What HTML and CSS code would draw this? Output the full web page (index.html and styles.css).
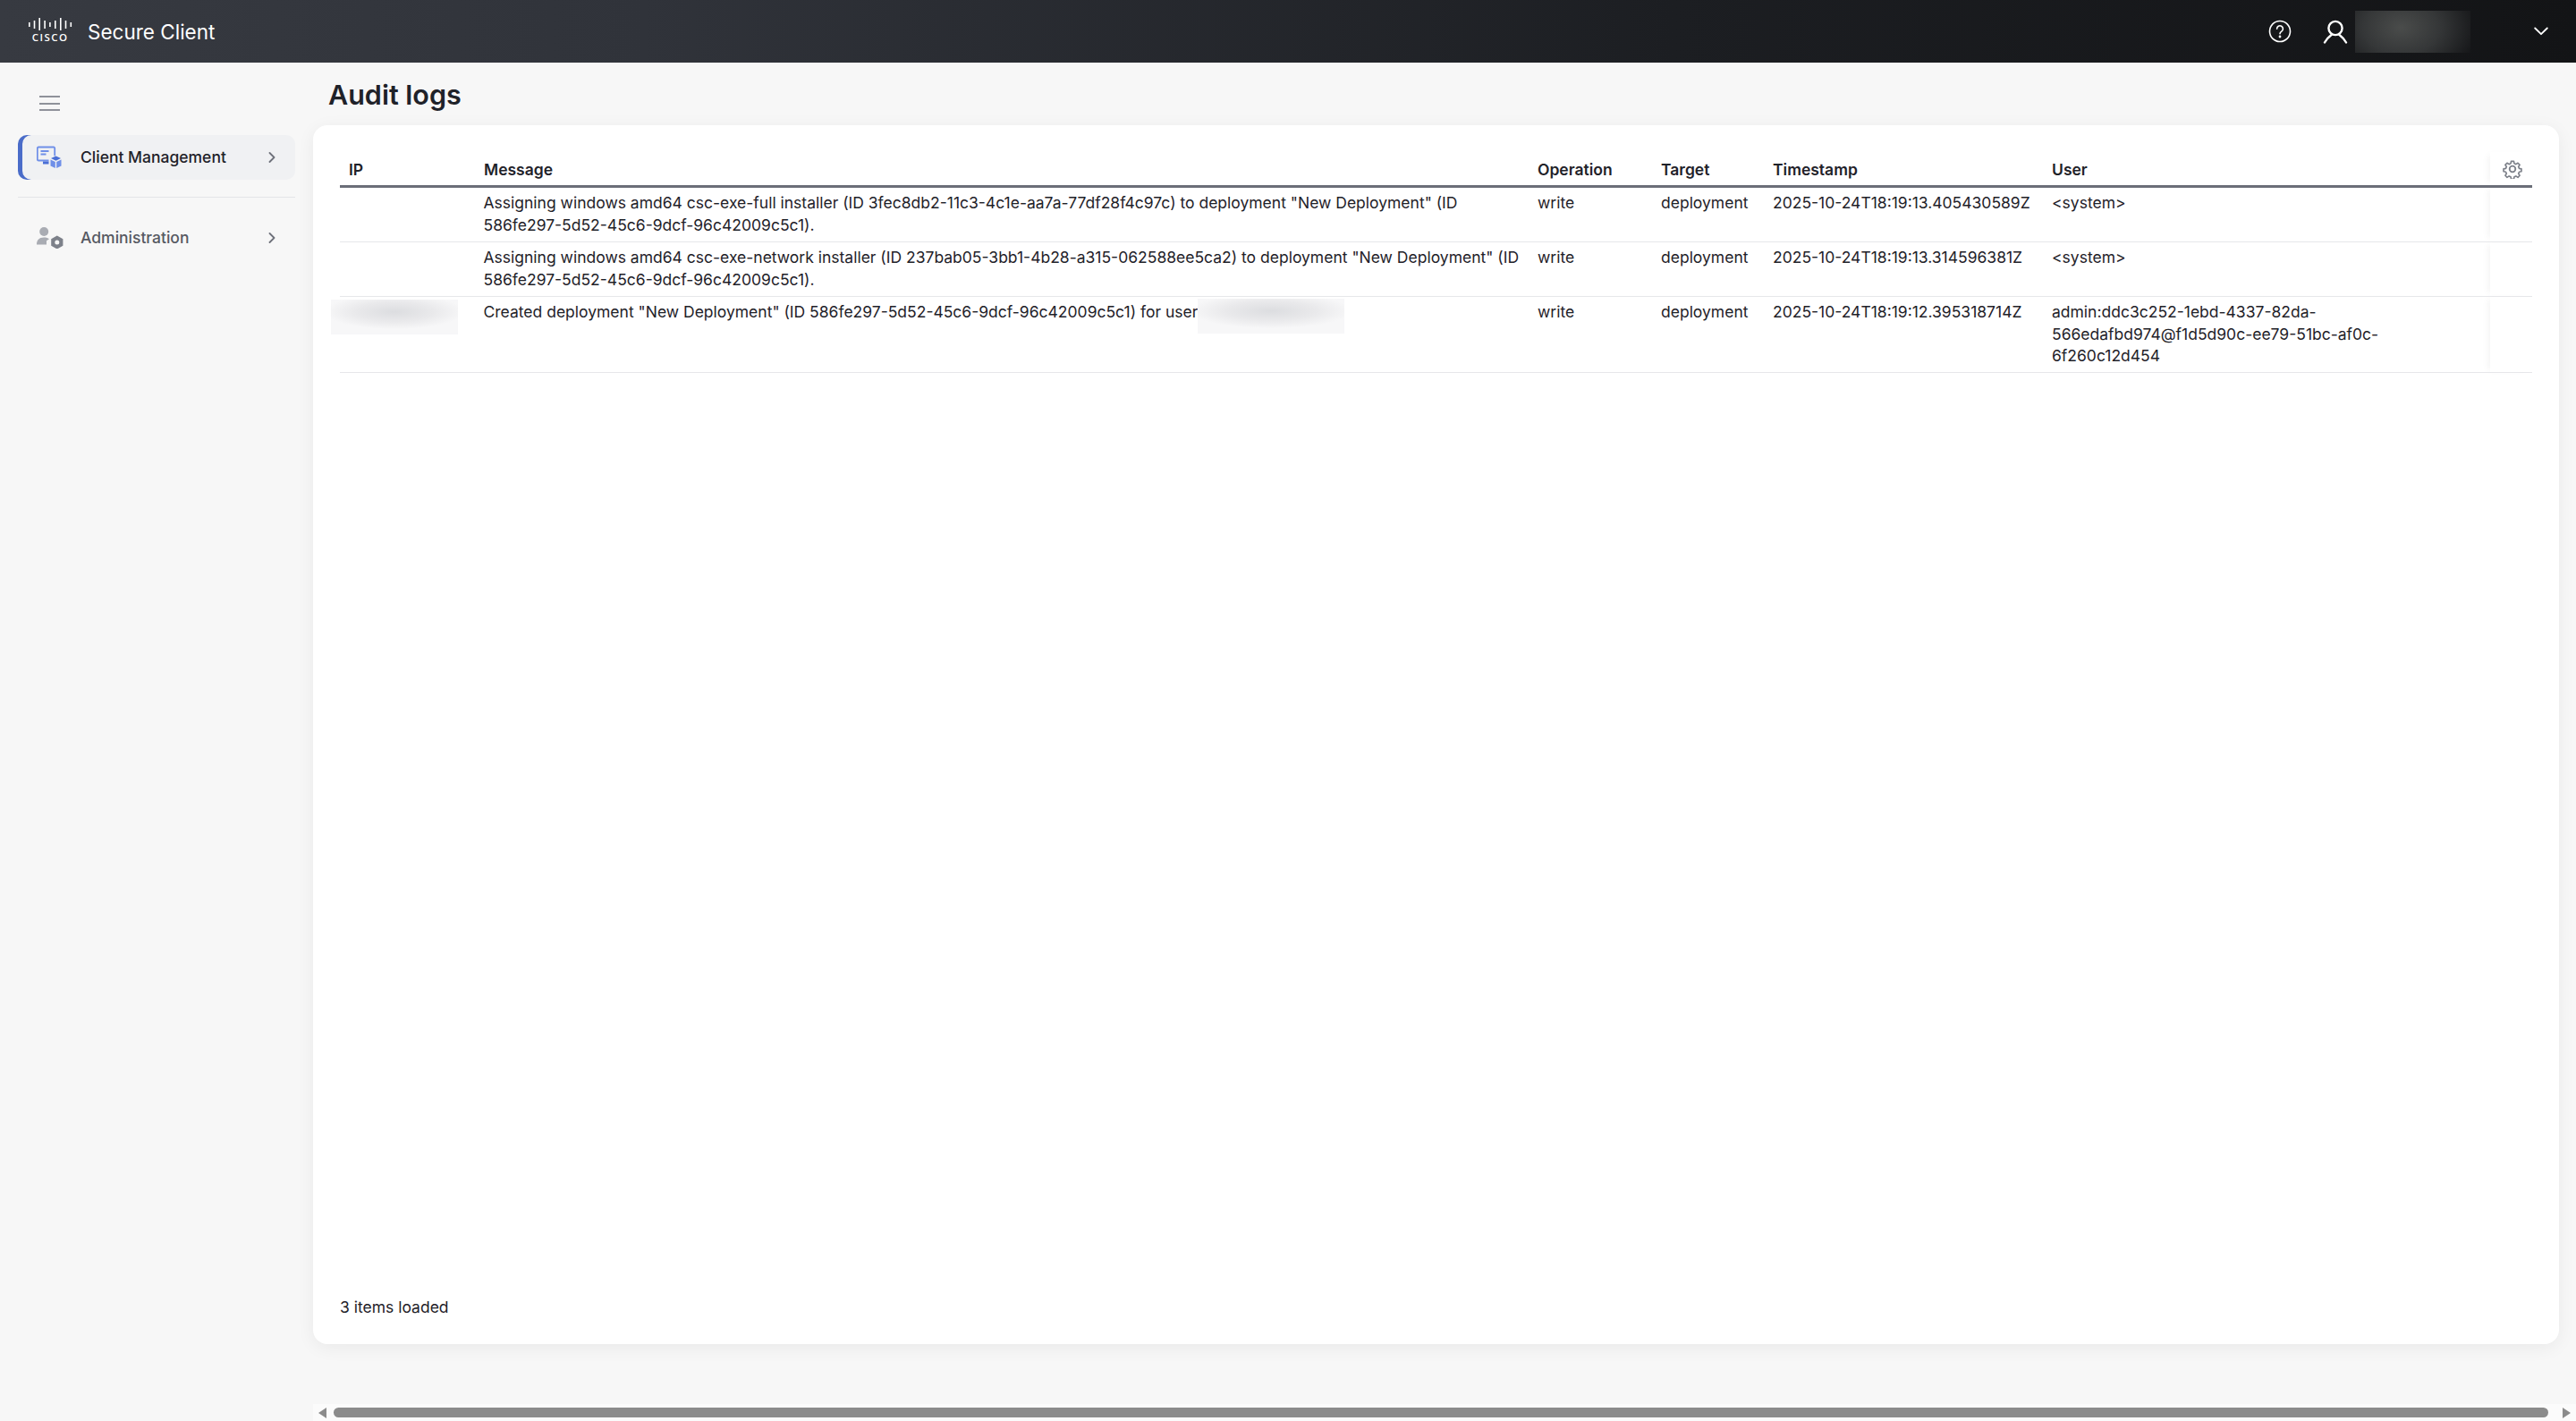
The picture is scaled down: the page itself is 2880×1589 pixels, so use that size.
FILE: index.html
```html
<!DOCTYPE html>
<html lang="en">
<head>
<meta charset="utf-8">
<title>Audit logs - Secure Client</title>
<link rel="stylesheet" href="styles.css">
</head>
<body>
<header class="topbar">
  <div class="brand">
    <svg class="logo" width="50" height="30" viewBox="0 0 50 30" aria-label="Cisco">
      <g fill="#fff">
        <rect x="0" y="5" width="1.6" height="5"/>
        <rect x="5.7" y="3" width="1.6" height="9"/>
        <rect x="11.4" y="0" width="1.6" height="14"/>
        <rect x="17.3" y="3" width="1.6" height="9"/>
        <rect x="23.1" y="5" width="1.6" height="5"/>
        <rect x="29" y="3" width="1.6" height="9"/>
        <rect x="35" y="0" width="1.6" height="14"/>
        <rect x="40.7" y="3" width="1.6" height="9"/>
        <rect x="46.5" y="5" width="1.6" height="5"/>
        <text class="logo-word" x="24.2" y="26" text-anchor="middle">CISCO</text>
      </g>
    </svg>
    <span class="product">Secure Client</span>
  </div>
  <div class="top-actions">
    <svg class="help" width="26" height="26" viewBox="0 0 26 26" fill="none" stroke="#fff" stroke-width="1.6" stroke-linecap="round">
      <circle cx="13" cy="13" r="11.5"/>
      <path d="M9.6 10.2a3.4 3.4 0 1 1 5.2 2.9c-1.1.7-1.8 1.3-1.8 2.6"/>
      <circle cx="13" cy="19" r=".6" fill="#fff"/>
    </svg>
    <svg class="person" width="28" height="27" viewBox="0 0 28 27" fill="none" stroke="#fff" stroke-width="2.4" stroke-linecap="round">
      <circle cx="14" cy="9.5" r="7.6"/>
      <path d="M2 25.5c2.4-4.3 5-6.6 7.5-8.5M26 25.5c-2.4-4.3-5-6.6-7.5-8.5"/>
    </svg>
    <div class="redact-user"></div>
    <svg class="caret" width="16" height="10" viewBox="0 0 16 10" fill="none" stroke="#fff" stroke-width="1.8" stroke-linecap="round" stroke-linejoin="round">
      <path d="M1.2 1.5 8 8.2l6.8-6.7"/>
    </svg>
  </div>
</header>

<div class="shell">
  <nav class="sidebar">
    <button class="menu-btn" aria-label="Menu">
      <span class="menu-line"></span><span class="menu-line"></span><span class="menu-line"></span>
    </button>
    <a class="nav-item nav-active">
      <svg width="28" height="26" viewBox="0 0 28 26" fill="none">
        <path d="M2 1.5h17a1.2 1.2 0 0 1 1.2 1.2v8.5M13.5 16.5H2a1.2 1.2 0 0 1-1.2-1.2V2.7A1.2 1.2 0 0 1 2 1.5" stroke="#6f8fe8" stroke-width="1.8"/>
        <path d="M4.5 6h9M4.5 9.5h6" stroke="#6f8fe8" stroke-width="1.8"/>
        <path d="M7 17.5h6.5v3H7z" fill="#4a6fd6"/>
        <path d="M21.5 11.5l5.5 2.6-5.5 2.6-5.500-2.600z" fill="#4a6fd6"/>
        <path d="M15.500 15.600l5.300 2.500v6.900l-5.300-2.400zM27.500 15.600l-5.300 2.500v6.900l5.300-2.400z" fill="#6f8fe8"/>
      </svg>
      <span class="nav-label">Client Management</span>
      <svg class="chev" width="8" height="12" viewBox="0 0 8 12" fill="none" stroke="#6e717a" stroke-width="1.8" stroke-linecap="round" stroke-linejoin="round"><path d="M1.5 1l5 5-5 5"/></svg>
    </a>
    <div class="nav-divider"></div>
    <a class="nav-item">
      <svg width="30" height="24" viewBox="0 0 30 24" fill="none">
        <circle cx="8.2" cy="5" r="5" fill="#a9acb3"/>
        <path d="M0 19.5c0-5 2.5-8 8.2-8 2.5 0 4.5.6 5.800 1.800l-3 2v4.200z" fill="#a9acb3"/>
        <path fill-rule="evenodd" d="M22.800 9.500l6.600 3.800v7.400l-6.600 3.800-6.600-3.800v-7.400zm0 5a2.500 2.500 0 1 0 0 5 2.500 2.500 0 0 0 0-5z" fill="#7d818a"/>
      </svg>
      <span class="nav-label nav-label-muted">Administration</span>
      <svg class="chev" width="8" height="12" viewBox="0 0 8 12" fill="none" stroke="#6e717a" stroke-width="1.8" stroke-linecap="round" stroke-linejoin="round"><path d="M1.5 1l5 5-5 5"/></svg>
    </a>
  </nav>

  <main class="content">
    <h1 class="page-title">Audit logs</h1>
    <section class="card">
      <div class="table-wrap">
        <table class="logs">
          <colgroup>
            <col class="c-ip"><col class="c-msg"><col class="c-op"><col class="c-target"><col class="c-time"><col class="c-user"><col class="c-gear">
          </colgroup>
          <thead>
            <tr>
              <th>IP</th><th>Message</th><th>Operation</th><th>Target</th><th>Timestamp</th><th>User</th>
              <th class="gear-cell">
                <svg class="gear" width="22" height="22" viewBox="0 0 24 24" fill="none" stroke="#7d818a" stroke-width="2" stroke-linejoin="round">
                  <circle cx="12" cy="12" r="3.6"/>
                  <path d="M10.2 1.5h3.600l.6 3 2.300 1 2.600-1.700 2.500 2.500-1.700 2.600 1 2.300 3 .6v3.500l-3 .6-1 2.300 1.700 2.600-2.500 2.500-2.600-1.700-2.300 1-.6 3h-3.600l-.6-3-2.300-1-2.600 1.700-2.500-2.500 1.700-2.600-1-2.300-3-.6v-3.500l3-.6 1-2.300-1.700-2.600 2.500-2.500 2.600 1.700 2.300-1z" transform="translate(1.200 1.200) scale(.9)"/>
                </svg>
              </th>
            </tr>
          </thead>
          <tbody>
            <tr>
              <td></td>
              <td>Assigning windows amd64 csc-exe-full installer (ID 3fec8db2-11c3-4c1e-aa7a-77df28f4c97c) to deployment "New Deployment" (ID 586fe297-5d52-45c6-9dcf-96c42009c5c1).</td>
              <td>write</td><td>deployment</td><td>2025-10-24T18:19:13.405430589Z</td><td>&lt;system&gt;</td><td class="gear-cell"></td>
            </tr>
            <tr>
              <td></td>
              <td>Assigning windows amd64 csc-exe-network installer (ID 237bab05-3bb1-4b28-a315-062588ee5ca2) to deployment "New Deployment" (ID 586fe297-5d52-45c6-9dcf-96c42009c5c1).</td>
              <td>write</td><td>deployment</td><td>2025-10-24T18:19:13.314596381Z</td><td>&lt;system&gt;</td><td class="gear-cell"></td>
            </tr>
            <tr>
              <td class="ip-cell"><span class="redact redact-ip"></span></td>
              <td>Created deployment "New Deployment" (ID 586fe297-5d52-45c6-9dcf-96c42009c5c1) for user <span class="redact redact-name"></span></td>
              <td>write</td><td>deployment</td><td>2025-10-24T18:19:12.395318714Z</td>
              <td>admin:ddc3c252-1ebd-4337-82da-566edafbd974@f1d5d90c-ee79-51bc-af0c-6f260c12d454</td><td class="gear-cell"></td>
            </tr>
          </tbody>
        </table>
      </div>
      <p class="count">3 items loaded</p>
    </section>
    <div class="hscroll">
      <span class="arrow arrow-left"></span>
      <span class="thumb"></span>
      <span class="arrow arrow-right"></span>
    </div>
  </main>
</div>
</body>
</html>
```
FILE: styles.css
```css
* { box-sizing: border-box; }
html, body { margin: 0; height: 100%; }
body {
  display: flex;
  flex-direction: column;
  overflow: hidden;
  background: #f7f7f7;
  color: #1f2229;
  font-family: Inter, "Liberation Sans", sans-serif;
  font-size: 17.5px;
}

/* top bar */
.topbar {
  flex: none;
  height: 70px;
  display: flex;
  align-items: center;
  justify-content: space-between;
  padding: 0 31px 0 32px;
  background: linear-gradient(90deg, #373a41 0%, #30333a 25%, #1c1e22 65%, #131416 100%);
  color: #fff;
}
.brand { display: flex; align-items: center; gap: 16px; }
.logo { display: block; overflow: visible; }
.logo-word { font-family: "Open Sans", sans-serif; font-size: 11.5px; font-weight: 600; letter-spacing: 1.5px; }
.product { font-size: 22.5px; font-weight: 400; }
.top-actions { display: flex; align-items: center; }
.help { margin-right: 35px; }
.person { margin-right: 8px; }
.redact-user {
  width: 129px;
  height: 47px;
  background: radial-gradient(ellipse 85px 60px at 40% 40%, #4a4c4b 0%, #353738 50%, #17181a 100%);
}
.caret { margin-left: 71px; }

/* shell */
.shell { flex: 1; min-height: 0; display: flex; }
.sidebar { flex: none; width: 350px; padding: 0 20px; }
.menu-btn {
  display: flex;
  flex-direction: column;
  gap: 5.5px;
  margin: 37px 0 27px 24px;
  padding: 0;
  border: 0;
  background: none;
}
.menu-line { display: block; width: 23px; height: 2px; background: #8f929a; }
.nav-item {
  display: flex;
  align-items: center;
  height: 50px;
  padding-left: 21px;
  padding-right: 22px;
  padding-bottom: 1px;
  border-radius: 10px;
}
.nav-item svg:first-child { flex: none; }
.nav-active {
  background: #f0f1f3;
  box-shadow: inset 5px 0 0 #4a6cc9;
}
.nav-label { flex: 1; margin-left: 21px; font-size: 17.5px; font-weight: 500; color: #1f2229; }
.nav-label-muted { color: #565962; margin-left: 19px; }
.nav-divider { height: 1px; margin: 19px 0 20px; background: #e4e5e8; }

/* content */
.content { flex: 1; min-width: 0; display: flex; flex-direction: column; }
.page-title {
  flex: none;
  height: 70px;
  margin: 0;
  padding: 18px 0 0 17px;
  font-size: 30.5px;
  line-height: 36px;
  font-weight: 600;
  color: #1f2229;
}
.card {
  flex: 1;
  min-height: 0;
  display: flex;
  flex-direction: column;
  margin-right: 19px;
  padding: 30px 30px 0;
  border-radius: 16px;
  background: #fff;
  box-shadow: 0 4px 20px rgba(0, 0, 0, .06);
}
.table-wrap { flex: 1; min-height: 0; }
.logs { width: 2451px; table-layout: fixed; border-collapse: collapse; font-size: 17.5px; line-height: 24.5px; }
.c-ip { width: 151px; }
.c-msg { width: 1178px; }
.c-op { width: 138px; }
.c-target { width: 125px; }
.c-time { width: 312px; }
.c-user { width: 500px; }
.c-gear { width: 47px; }
.logs th {
  height: 38px;
  padding: 3px 10px 0;
  text-align: left;
  font-weight: 600;
  border-bottom: 3px solid #6b6e78;
}
.logs td {
  padding: 5.5px 10px 5.5px;
  vertical-align: top;
  border-bottom: 1.5px solid #e6e7ea;
  word-break: break-word;
}
.logs td:nth-child(2) { padding-left: 9.5px; }
.logs .gear-cell { padding: 0; box-shadow: -6px 0 8px -4px rgba(0, 0, 0, .05); text-align: center; }
.logs th.gear-cell { padding-top: 1px; }
.gear { display: block; margin: 0 0 0 14px; }
.logs .ip-cell { position: relative; }
.redact {
  position: absolute;
  height: 39px;
  background: radial-gradient(ellipse 55% 50% at 50% 35%, #dcdde0 0%, #e9e9eb 55%, #f7f7f8 100%);
}
.redact-ip { width: 142px; left: -10px; top: 3px; }
.redact-name { width: 164px; margin-top: -3px; }
.count { flex: none; margin: 0 0 29px; font-size: 17.5px; line-height: 24px; }

/* scrollbar */
.hscroll {
  flex: none;
  height: 19px;
  margin-top: 67px;
  display: flex;
  align-items: center;
  padding: 0 6px;
  background: #fbfbfb;
}
.thumb { flex: 1; height: 11px; margin: 0 16px 0 8px; border-radius: 6px; background: #8b8b8b; }
.arrow { flex: none; width: 0; height: 0; border-top: 6px solid transparent; border-bottom: 6px solid transparent; }
.arrow-left { border-right: 9px solid #8b8b8b; }
.arrow-right { border-left: 9px solid #8b8b8b; }
```
